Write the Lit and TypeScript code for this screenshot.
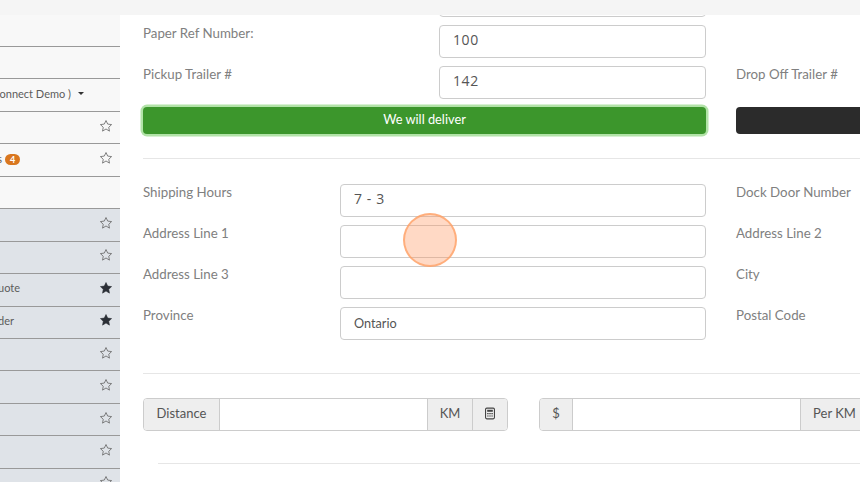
import { LitElement, html, css, svg } from "lit";
import { customElement } from "lit/decorators.js";

type Row = { text?: string; end?: number; caret?: boolean; badge?: string; star?: "o" | "f"; shade?: boolean; h: number };

const H = 32.45;
const rows: Row[] = [
  { h: 32 },
  { h: H },
  { text: "Connect Demo )", end: 84, caret: true, h: H },
  { star: "o", h: H },
  { text: "Loads", end: 20, badge: "4", star: "o", h: H },
  { h: H },
  { star: "o", shade: true, h: H },
  { star: "o", shade: true, h: H },
  { text: "Quote", end: 20, star: "f", shade: true, h: H },
  { text: "Order", end: 14, star: "f", shade: true, h: H },
  { star: "o", shade: true, h: H },
  { star: "o", shade: true, h: H },
  { star: "o", shade: true, h: H },
  { star: "o", shade: true, h: H },
  { star: "o", shade: true, h: H },
];

const starPath = "M12 2.6l2.9 6.1 6.7.9-4.9 4.6 1.2 6.6L12 17.1l-5.9 3.7 1.2-6.6L2.4 9.6l6.7-.9z";

const starIcon = (kind: "o" | "f") => html`<svg class="star ${kind}" viewBox="0 0 24 24">${svg`<path d=${starPath}></path>`}</svg>`;

const field = (label: string, value: string) => html`
  <div class="field">
    <div class="lab">${label}</div>
    <div class="inp">${value}</div>
  </div>`;

@customElement("app-root")
export class AppRoot extends LitElement {
  static styles = css`
    :host { display: block; width: 860px; height: 482px; overflow: hidden; background: #fff; position: relative; font-family: Lato, "Open Sans", sans-serif; font-size: 13.3px; color: #808080; }
    .top { height: 15px; background: #f5f5f5; }
    .main { display: flex; height: 467px; }
    .side { flex: 0 0 120px; overflow: hidden; background: #f8f8f8; display: flex; flex-direction: column; }
    .row { flex: none; box-sizing: border-box; border-bottom: 1px solid #999; display: flex; align-items: center; padding: 0 7px 4px 0; color: #5c5c5c; font-size: 11px; }
    .row.shade { background: #dfe3e8; }
    .label { flex: none; display: flex; justify-content: flex-end; align-items: center; white-space: nowrap; gap: 3px; }
    .caret { width: 0; height: 0; margin-left: 4px; border: 3px solid transparent; border-top: 3px solid #333; border-bottom: 0; }
    .badge { flex: none; width: 15px; height: 11px; margin-top: 3px; border-radius: 6px; background: #d9771f; color: #fff; font-size: 9px; font-weight: 700; line-height: 11px; text-align: center; }
    .star { flex: none; width: 14px; height: 14px; margin-left: auto; }
    .star.o path { fill: none; stroke: #666; stroke-width: 1.4; }
    .star.f path { fill: #2b2f36; stroke: #2b2f36; stroke-width: 1; }

    .content { flex: 1; min-width: 0; overflow: hidden; padding-left: 23px; }
    .cols { display: flex; gap: 30px; width: 800px; }
    .col { flex: 0 0 563px; display: flex; flex-direction: column; gap: 8px; }
    .col.r { flex: 0 0 300px; }
    .first { margin-top: -31px; }
    .field { display: flex; height: 33px; }
    .lab { flex: 1; line-height: 17px; white-space: nowrap; }
    .inp { flex: 0 0 366px; box-sizing: border-box; height: 33px; border: 1px solid #ccc; border-radius: 4px; padding: 0 13px; line-height: 28px; font-family: "Open Sans", sans-serif; font-size: 14px; color: #555; letter-spacing: .6px; background: #fff; }
    .inp.ont { font-family: Lato, sans-serif; font-size: 12.7px; letter-spacing: 0; line-height: 30px; }
    .narrow .inp { flex-basis: 267px; }
    .r .lab { flex: none; }
    .spacer { height: 33px; }
    .btn { height: 27px; border-radius: 4px; color: #fff; text-align: center; line-height: 25px; font-size: 12.8px; }
    .btn.green { background: #3c962c; box-shadow: 0 0 0 2.5px #b2e3a8; }
    .btn.dark { background: #2b2b2b; }
    .hr { height: 1px; background: #e6e6e6; margin-right: -60px; }
    .hr.a { margin-top: 24px; margin-bottom: 25px; }
    .hr.b { margin-top: 33px; margin-bottom: 24px; }
    .hr.c { margin-top: 32px; margin-left: 15px; }
    .groups { display: flex; gap: 31px; width: 800px; }
    .group { display: flex; height: 33px; flex: none; box-sizing: border-box; border: 1px solid #ccc; border-radius: 4px; overflow: hidden; color: #555; font-size: 13px; }
    .group.g1 { width: 365px; }
    .group.g2 { width: 400px; }
    .add { flex: none; box-sizing: border-box; background: #eee; display: flex; align-items: center; justify-content: center; padding-bottom: 3px; }
    .add + .add, .ginp + .add { border-left: 1px solid #ccc; }
    .ginp { flex: 1; background: #fff; border-left: 1px solid #ccc; }
    .w75 { width: 75px; } .w44 { width: 45px; } .w35 { width: 35px; } .w33 { width: 32px; } .w61 { width: 68px; }
    .g2 .ginp { flex: none; width: 227px; }
    .calc { width: 10px; height: 13px; display: block; }
    .cursor { position: absolute; left: 403px; top: 213px; width: 54px; height: 54px; box-sizing: border-box; border-radius: 50%; background: rgba(255, 150, 95, .36); border: 2px solid rgba(255, 160, 100, .75); pointer-events: none; }
  `;

  render() {
    return html`
      <div class="top"></div>
      <div class="main">
        <div class="side">
          ${rows.map(
            (r) => html`<div class="row ${r.shade ? "shade" : ""}" style="height:${r.h}px">
              ${r.text
                ? html`<div class="label" style="width:${r.end}px"><span>${r.text}</span>${r.caret ? html`<i class="caret"></i>` : ""}${r.badge ? html`<span class="badge">${r.badge}</span>` : ""}</div>`
                : ""}
              ${r.star ? starIcon(r.star) : ""}
            </div>`
          )}
        </div>
        <div class="content">
          <div class="cols first">
            <div class="col narrow">
              ${field("", "")}
              ${field("Paper Ref Number:", "100")}
              ${field("Pickup Trailer #", "142")}
              <div class="btn green">We will deliver</div>
            </div>
            <div class="col r">
              <div class="spacer"></div>
              <div class="spacer"></div>
              ${html`<div class="field"><div class="lab">Drop Off Trailer #</div></div>`}
              <div class="btn dark"></div>
            </div>
          </div>
          <div class="hr a"></div>
          <div class="cols">
            <div class="col">
              ${field("Shipping Hours", "7 - 3")}
              ${field("Address Line 1", "")}
              ${field("Address Line 3", "")}
              ${html`<div class="field"><div class="lab">Province</div><div class="inp ont">Ontario</div></div>`}
            </div>
            <div class="col r">
              ${["Dock Door Number", "Address Line 2", "City", "Postal Code"].map((l) => html`<div class="field"><div class="lab">${l}</div></div>`)}
            </div>
          </div>
          <div class="hr b"></div>
          <div class="groups">
            <div class="group g1">
              <div class="add w75">Distance</div>
              <div class="ginp"></div>
              <div class="add w44">KM</div>
              <div class="add w35">
                <svg class="calc" viewBox="0 0 11 13">
                  <rect x=".6" y=".6" width="9.8" height="11.8" rx="1.4" fill="none" stroke="#444" stroke-width="1.2"></rect>
                  <rect x="2.4" y="2.4" width="6.2" height="2.2" fill="#444"></rect>
                  <path d="M2.4 6h1.6v1.3H2.4zM4.7 6h1.6v1.3H4.7zM7 6h1.6v1.3H7zM2.4 8.6h1.6v1.3H2.4zM4.7 8.6h1.6v1.3H4.7zM7 8.6h1.6v1.3H7z" fill="#444"></path>
                </svg>
              </div>
            </div>
            <div class="group g2">
              <div class="add w33">$</div>
              <div class="ginp"></div>
              <div class="add w61">Per KM</div>
            </div>
          </div>
          <div class="hr c"></div>
        </div>
      </div>
      <div class="cursor"></div>
    `;
  }
}
